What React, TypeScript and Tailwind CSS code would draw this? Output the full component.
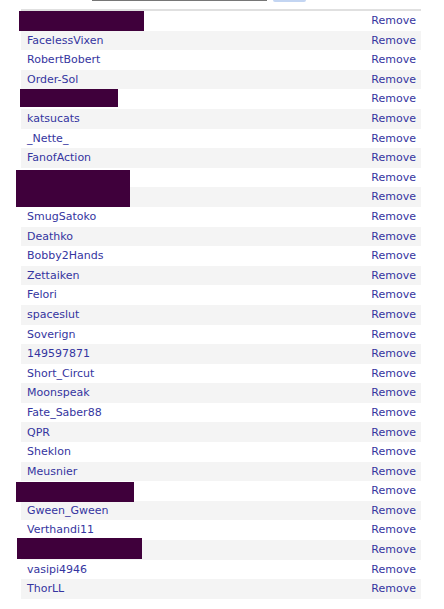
import React from "react";

const rows: (string | null)[] = [
  null, "FacelessVixen", "RobertBobert", "Order-Sol", null, "katsucats", "_Nette_", "FanofAction",
  null, null, "SmugSatoko", "Deathko", "Bobby2Hands", "Zettaiken", "Felori", "spaceslut", "Soverign",
  "149597871", "Short_Circut", "Moonspeak", "Fate_Saber88", "QPR", "Sheklon", "Meusnier", null,
  "Gween_Gween", "Verthandi11", null, "vasipi4946", "ThorLL",
];

const redactions = [
  { left: 19, top: 11, width: 125, height: 20 },
  { left: 20, top: 89, width: 98, height: 18 },
  { left: 16, top: 170, width: 114, height: 37 },
  { left: 16, top: 482, width: 118, height: 20 },
  { left: 17, top: 538, width: 125, height: 21 },
];

export default function App() {
  return (
    <div className="relative w-[444px] h-[609px] bg-white overflow-hidden" style={{ fontFamily: '"DejaVu Sans", Verdana, sans-serif' }}>
      <div className="flex h-[9px] items-start">
        <div className="ml-[92px] w-[175px] h-[1px] bg-[#767676]" />
        <div className="ml-[6px] w-[33px] h-[2px] bg-[#c3d5f2] rounded-b-sm" />
      </div>
      <div className="ml-[21px] mr-[23px] h-[2px] bg-[#e0e0e0]" />
      <div className="ml-[21px] mr-[23px]">
        {rows.map((name, i) => (
          <div
            key={i}
            className={`flex items-center justify-between h-[19.6px] pl-[6px] pr-[5px] pt-[1px] text-[11px] text-[#3535a0] ${i % 2 === 1 ? "bg-[#f4f4f4]" : "bg-white"}`}
          >
            <span>{name ?? ""}</span>
            <span>Remove</span>
          </div>
        ))}
      </div>
      {redactions.map((r, i) => (
        <div key={i} className="absolute bg-[#3f003b]" style={{ left: r.left, top: r.top, width: r.width, height: r.height }} />
      ))}
    </div>
  );
}
